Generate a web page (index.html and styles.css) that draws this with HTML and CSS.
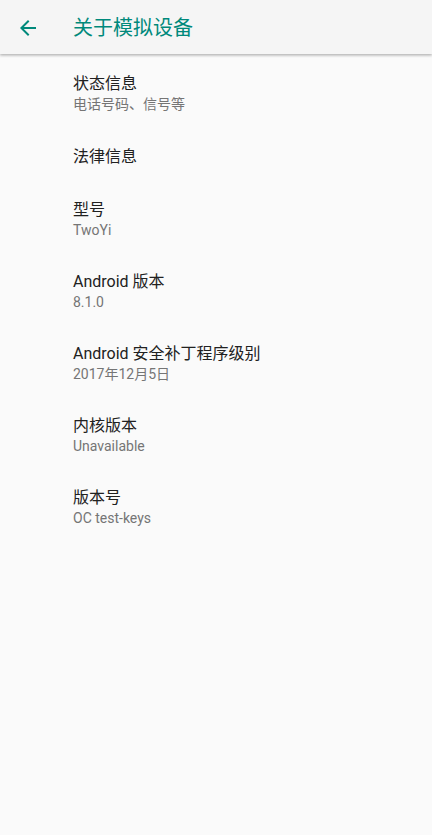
FILE: index.html
```html
<!DOCTYPE html>
<html lang="zh">
<head>
<meta charset="utf-8">
<link rel="stylesheet" href="styles.css">
</head>
<body>
<header class="toolbar">
  <div class="nav-btn">
    <svg width="24" height="24" viewBox="0 0 24 24"><path d="M20 11H7.83l5.59-5.59L12 4l-8 8 8 8 1.41-1.41L7.83 13H20v-2z" fill="#00897b"/></svg>
  </div>
  <h1 class="title">关于模拟设备</h1>
</header>
<main class="list">
  <div class="pref two"><div class="pref-title">状态信息</div><div class="pref-summary">电话号码、信号等</div></div>
  <div class="pref one"><div class="pref-title">法律信息</div></div>
  <div class="pref two"><div class="pref-title">型号</div><div class="pref-summary">TwoYi</div></div>
  <div class="pref two"><div class="pref-title">Android 版本</div><div class="pref-summary">8.1.0</div></div>
  <div class="pref two"><div class="pref-title">Android 安全补丁程序级别</div><div class="pref-summary">2017年12月5日</div></div>
  <div class="pref two"><div class="pref-title">内核版本</div><div class="pref-summary">Unavailable</div></div>
  <div class="pref two"><div class="pref-title">版本号</div><div class="pref-summary">OC test-keys</div></div>
</main>
</body>
</html>
```
FILE: styles.css
```css
html, body {
  margin: 0;
  padding: 0;
  background: #fafafa;
  font-family: Roboto, "Noto Sans CJK SC", sans-serif;
  height: 100%;
}
.toolbar {
  height: 54px;
  background: #f5f5f5;
  display: flex;
  align-items: center;
  box-shadow: 0 1px 3px rgba(0,0,0,0.25), 0 2px 2px rgba(0,0,0,0.08);
  position: relative;
  z-index: 1;
}
.nav-btn {
  width: 24px;
  height: 24px;
  margin-left: 16px;
  margin-top: 1px;
  display: flex;
}
.title {
  margin: 1px 0 0 33px;
  font-size: 20px;
  font-weight: 400;
  color: #00897b;
  line-height: 24px;
}
.list {
  padding-top: 4px;
}
.pref {
  padding-left: 73px;
  display: flex;
  flex-direction: column;
  justify-content: center;
}
.pref.two { height: 72px; }
.pref.one { height: 54px; }
.pref-title {
  font-size: 16px;
  line-height: 20px;
  color: #212121;
}
.pref-summary {
  font-size: 14px;
  line-height: 20px;
  color: #757575;
}
```
